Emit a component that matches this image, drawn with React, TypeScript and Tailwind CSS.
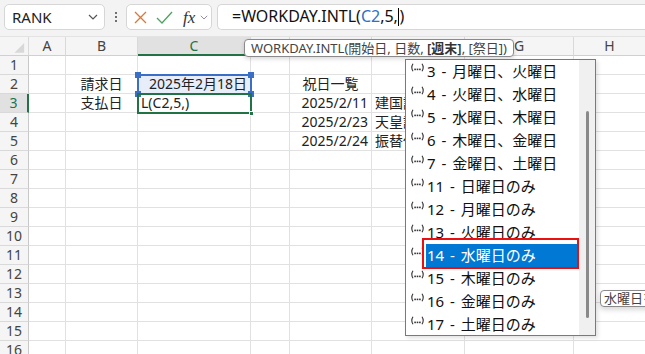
import React from "react";

const colW = [29, 37, 72, 113, 39, 82, 93, 109, 72];
const letters = ["", "A", "B", "C", "D", "E", "F", "G", "H"];

type Cell = { t: string; align?: "l" | "c" | "r" };
const data: Record<number, Record<number, Cell>> = {
  2: { 2: { t: "請求日", align: "c" }, 3: { t: "2025年2月18日", align: "r" }, 5: { t: "祝日一覧", align: "c" } },
  3: { 2: { t: "支払日", align: "c" }, 3: { t: "L(C2,5,)", align: "l" }, 5: { t: "2025/2/11", align: "r" }, 6: { t: "建国記念の日", align: "l" } },
  4: { 5: { t: "2025/2/23", align: "r" }, 6: { t: "天皇誕生日", align: "l" } },
  5: { 5: { t: "2025/2/24", align: "r" }, 6: { t: "振替休日", align: "l" } },
};

const items = [
  "3 - 月曜日、火曜日",
  "4 - 火曜日、水曜日",
  "5 - 水曜日、木曜日",
  "6 - 木曜日、金曜日",
  "7 - 金曜日、土曜日",
  "11 - 日曜日のみ",
  "12 - 月曜日のみ",
  "13 - 火曜日のみ",
  "14 - 水曜日のみ",
  "15 - 木曜日のみ",
  "16 - 金曜日のみ",
  "17 - 土曜日のみ",
];

function Chevron({ color = "#444", w = 10 }: { color?: string; w?: number }) {
  return (
    <svg width={w} height={w * 0.6} viewBox="0 0 10 6" fill="none">
      <path d="M1 1 L5 5 L9 1" stroke={color} strokeWidth="1.2" />
    </svg>
  );
}

function ArgIcon() {
  return (
    <svg width="15" height="9" viewBox="0 0 15 9" className="shrink-0 self-start mt-[3px]">
      <path d="M3 0.8 Q0.6 4.5 3 8.2" stroke="#333" strokeWidth="1.1" fill="none" />
      <path d="M12 0.8 Q14.4 4.5 12 8.2" stroke="#333" strokeWidth="1.1" fill="none" />
      <rect x="4.3" y="5.6" width="1.6" height="1.6" fill="#333" />
      <rect x="6.7" y="5.6" width="1.6" height="1.6" fill="#333" />
      <rect x="9.1" y="5.6" width="1.6" height="1.6" fill="#333" />
    </svg>
  );
}

export default function App() {
  const rows = Array.from({ length: 16 }, (_, i) => i + 1);
  return (
    <div className="relative w-[645px] h-[354px] overflow-hidden bg-white font-['Noto_Sans','Noto_Sans_CJK_JP',sans-serif] text-[#222]">
      {/* toolbar */}
      <div className="flex items-start h-[37px] bg-[#f3f3f3] pt-[4px] pl-[4px] border-b border-[#e3e3e3]">
        <div className="flex items-center justify-between w-[101px] h-[26px] bg-white border border-[#d6d6d6] rounded-[5px] pl-[7px] pr-[6px]">
          <span className="text-[15px] leading-none text-[#222]">RANK</span>
          <Chevron color="#555" w={10} />
        </div>
        <div className="flex flex-col items-center justify-center gap-[2px] w-[21px] h-[26px]">
          <div className="w-[2px] h-[2px] bg-[#444] rounded-full" />
          <div className="w-[2px] h-[2px] bg-[#444] rounded-full" />
          <div className="w-[2px] h-[2px] bg-[#444] rounded-full" />
        </div>
        <div className="flex items-center w-[86px] h-[26px] bg-white border border-[#d6d6d6] rounded-[5px] pl-[7px]">
          <svg width="13" height="13" viewBox="0 0 13 13">
            <path d="M1 1 L12 12 M12 1 L1 12" stroke="#d9773a" strokeWidth="1.3" />
          </svg>
          <svg width="17" height="13" viewBox="0 0 17 13" className="ml-[9px]">
            <path d="M1 7 L6 12 L16 1" stroke="#4ca35f" strokeWidth="1.3" fill="none" />
          </svg>
          <span className="ml-[10px] font-['Liberation_Serif',serif] italic text-[17px] leading-none text-[#333]">fx</span>
          <span className="ml-[5px]">
            <Chevron color="#8a86b0" w={8} />
          </span>
        </div>
        <div className="ml-[5px] flex items-center flex-1 h-[26px] bg-white border border-[#d6d6d6] border-r-0 rounded-l-[5px] pl-[14px]">
          <span className="text-[16px] leading-none text-[#111] whitespace-nowrap">
            =WORKDAY.INTL(<span className="text-[#2f6fc6]">C2</span>,5,
            <span className="inline-block w-[1.5px] h-[18px] bg-black align-middle -mt-[2px]" />)
          </span>
        </div>
      </div>

      {/* sheet */}
      <div className="grid grid-cols-[29px_37px_72px_113px_39px_82px_93px_109px_72px]">
        {letters.map((l, ci) => (
          <div
            key={"h" + ci}
            className={
              "h-[19px] flex items-center justify-center text-[14px] leading-none border-r border-[#d9d9d9] " +
              (ci === 3
                ? "bg-[#e1e1e1] border-b-[2px] border-b-[#217346] text-[#217346]"
                : "bg-[#f5f5f5] border-b border-b-[#d0d0d0] text-[#444]")
            }
          >
            {ci === 0 ? (
              <svg width="29" height="19" viewBox="0 0 29 19">
                <path d="M25 6 L25 16 L15 16 Z" fill="#d8d8d8" />
              </svg>
            ) : (
              l
            )}
          </div>
        ))}
        {rows.map((r) =>
          colW.map((_, ci) => {
            if (ci === 0) {
              return (
                <div
                  key={r + "-" + ci}
                  className={
                    "h-[19px] flex items-center justify-center text-[14px] leading-none border-b border-[#d9d9d9] " +
                    (r === 3
                      ? "bg-[#e1e1e1] border-r-[2px] border-r-[#217346] text-[#217346]"
                      : "bg-[#f5f5f5] border-r border-r-[#c8c8c8] text-[#444]")
                  }
                >
                  {r}
                </div>
              );
            }
            const c = data[r]?.[ci];
            const bg = r === 2 && ci === 3 ? "bg-[#e8eef9]" : "";
            return (
              <div
                key={r + "-" + ci}
                className={
                  "relative h-[19px] flex items-center border-r border-b border-[#e1e1e1] text-[14px] leading-none whitespace-nowrap " +
                  bg +
                  (c?.align === "r" ? " justify-end pr-[3px]" : c?.align === "c" ? " justify-center" : " justify-start pl-[3px]")
                }
              >
                {c?.t}
              </div>
            );
          })
        )}
      </div>

      {/* C2 reference highlight */}
      <div className="absolute left-[137px] top-[74px] w-[115px] h-[21px] border-[2px] border-[#3b6fc7]">
        <div className="absolute -left-[4px] -top-[4px] w-[6px] h-[6px] bg-[#3b6fc7]" />
        <div className="absolute -right-[4px] -top-[4px] w-[6px] h-[6px] bg-[#3b6fc7]" />
        <div className="absolute -left-[4px] -bottom-[4px] w-[6px] h-[6px] bg-[#3b6fc7]" />
        <div className="absolute -right-[4px] -bottom-[4px] w-[6px] h-[6px] bg-[#3b6fc7]" />
      </div>
      {/* C3 active cell */}
      <div className="absolute left-[137px] top-[93px] w-[115px] h-[21px] border-[2px] border-[#217346]">
        <div className="absolute -right-[4px] -bottom-[4px] w-[5px] h-[5px] bg-[#217346] border border-white" />
      </div>

      {/* function tooltip */}
      <div className="absolute left-[244px] top-[39px] h-[18px] px-[6px] flex items-center bg-white border border-[#8a8a8a] rounded-[4px] shadow-[0_2px_4px_rgba(0,0,0,0.15)] text-[13px] leading-none text-[#444] whitespace-nowrap">
        <span>WORKDAY.INTL(開始日, 日数,&nbsp;</span>
        <span className="font-semibold text-[#333]">[週末]</span>
        <span>, [祭日])</span>
      </div>

      {/* autocomplete dropdown */}
      <div className="absolute left-[405px] top-[59px] w-[191px] h-[277px] bg-white border border-[#7a7a7a] shadow-[2px_2px_4px_rgba(0,0,0,0.12)] flex">
        <div className="flex-1 flex flex-col">
          {items.map((it, i) => (
            <div key={i} className="h-[23px] flex items-center pl-[4px] gap-[1px]">
              <ArgIcon />
              <span
                className={
                  "flex-1 h-[23px] flex items-center pl-[1px] text-[15px] leading-none whitespace-nowrap [word-spacing:2px] " +
                  (i === 8 ? "bg-[#0078d4] text-white mr-[1px]" : "text-[#111]")
                }
              >
                {it}
              </span>
            </div>
          ))}
        </div>
        <div className="w-[16px] bg-[#f0f0f0] flex justify-center pt-[51px]">
          <div className="w-[3px] h-[207px] bg-[#8a8a8a] rounded-full" />
        </div>
      </div>
      {/* red annotation */}
      <div className="absolute left-[422px] top-[238px] w-[157px] h-[31px] border-[2px] border-[#e81010]" />

      {/* small description tooltip */}
      <div className="absolute left-[600px] top-[290px] h-[17px] pl-[3px] pr-[6px] flex items-center bg-white border border-[#8a8a8a] rounded-[4px] shadow-[0_3px_5px_rgba(0,0,0,0.15)] text-[13px] leading-none text-[#444] whitespace-nowrap">
        水曜日を週末とします
      </div>
    </div>
  );
}
